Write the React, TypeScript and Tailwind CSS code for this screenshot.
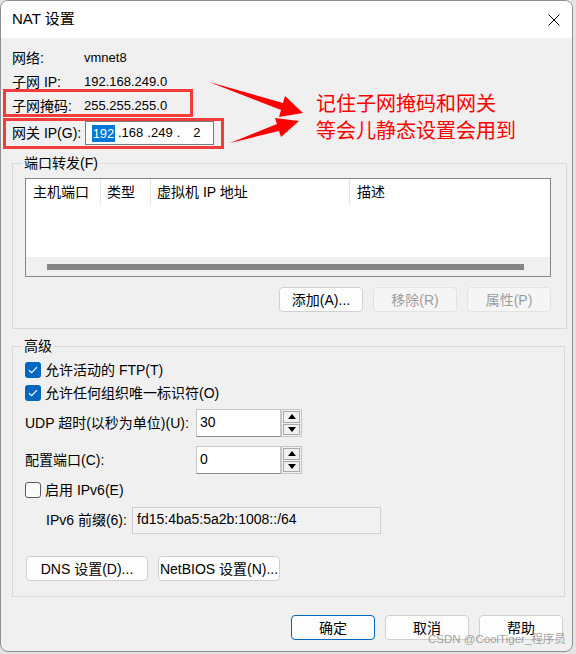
import React from 'react';

type BtnProps = {
  children: React.ReactNode;
  disabled?: boolean;
  primary?: boolean;
  width?: string;
};

function Btn({ children, disabled, primary, width = 'w-[84px]' }: BtnProps) {
  let tone = 'bg-[#fdfdfd] border border-[#d0d0d0] text-black';
  if (disabled) tone = 'bg-[#f5f5f5] border border-[#e3e3e3] text-[#9d9d9d]';
  if (primary) tone = 'bg-[#fdfdfd] border-[1.5px] border-[#0067c0] text-black';
  return (
    <button
      type="button"
      disabled={disabled}
      className={`${width} h-[25px] rounded-[4px] ${tone} flex items-center justify-center text-[14px] leading-none shrink-0`}
    >
      {children}
    </button>
  );
}

function Check({ checked }: { checked?: boolean }) {
  if (!checked) {
    return <span className="w-[16px] h-[16px] rounded-[3px] border border-[#5b5b5b] bg-[#fbfbfb] shrink-0" />;
  }
  return (
    <span className="w-[16px] h-[16px] rounded-[3px] bg-[#0067c0] flex items-center justify-center shrink-0">
      <svg width="10" height="8" viewBox="0 0 10 8">
        <path d="M1 4.2 3.6 6.6 9 1.2" fill="none" stroke="#ffffff" strokeWidth="1.2" />
      </svg>
    </span>
  );
}

function Tri({ up }: { up?: boolean }) {
  return (
    <svg width="8" height="5" viewBox="0 0 8 5">
      <path d={up ? 'M0 5 4 0 8 5Z' : 'M0 0 4 5 8 0Z'} fill="#000000" />
    </svg>
  );
}

function SpinField({ value }: { value: string }) {
  return (
    <div className="flex h-[28px]">
      <div className="w-[85px] h-full bg-white border border-[#c6c6c6] border-b-[#8c8c8c] pl-[3px] pt-[3px] text-[14px] leading-[18px]">
        {value}
      </div>
      <div className="w-[21px] h-full border border-[#c6c6c6] bg-[#f0f0f0] p-[1px] flex flex-col gap-[1px]">
        <div className="flex-1 border border-[#a9a9a9] flex items-center justify-center">
          <Tri up />
        </div>
        <div className="flex-1 border border-[#a9a9a9] flex items-center justify-center">
          <Tri />
        </div>
      </div>
    </div>
  );
}

const info = [
  { label: '网络:', value: 'vmnet8' },
  { label: '子网 IP:', value: '192.168.249.0' },
  { label: '子网掩码:', value: '255.255.255.0' },
];

export default function App() {
  return (
    <div className="relative w-[576px] h-[654px] bg-[#e4e4e4] text-black font-['Liberation_Sans','Noto_Sans_CJK_SC',sans-serif]">
      <div className="w-[573px] h-[652px] rounded-[8px] border border-[#8f8f8f] bg-[#f0f0f0] overflow-hidden flex flex-col">
        {/* title bar */}
        <div className="h-[37px] bg-white flex items-center justify-between pl-[11px] pr-[12px] shrink-0">
          <span className="text-[15px]">NAT 设置</span>
          <svg width="12" height="12" viewBox="0 0 12 12">
            <path d="M0.5 0.5 11.5 11.5M11.5 0.5 0.5 11.5" stroke="#000000" strokeWidth="1" />
          </svg>
        </div>

        <div className="flex-1 flex flex-col pl-[11px] pr-[7px] pt-[8px] text-[14px]">
          {info.map((r) => (
            <div key={r.label} className="h-[24px] flex items-center">
              <span className="w-[72px]">{r.label}</span>
              <span className="text-[13px]">{r.value}</span>
            </div>
          ))}
          <div className="h-[30px] flex items-center">
            <span className="w-[73px]">网关 IP(G):</span>
            <div className="w-[129px] h-[24px] border border-[#7a7a7a] bg-white flex items-center pl-[6px] text-[13px] whitespace-pre">
              <span className="w-[23px] bg-[#0078d7] text-white text-center leading-[17px]">192</span>
              <span className="ml-[3px]">.168</span>
              <span className="ml-[4px]">.249</span>
              <span className="ml-[4px]">.</span>
              <span className="ml-[13px]">2</span>
            </div>
          </div>

          {/* port forwarding */}
          <fieldset className="mt-[7px] border border-[#d8d8d8] pl-[12px] pr-[15px] pb-[16px]">
            <legend className="px-[2px] ml-[-3px] leading-[16px]">端口转发(F)</legend>
            <div className="mt-[7px] w-[526px] h-[99px] border border-[#828790] bg-white flex flex-col">
              <div className="h-[26px] flex text-[14px]">
                <div className="w-[75px] pl-[7px] flex items-center border-r border-[#e5e5e5]">主机端口</div>
                <div className="w-[50px] pl-[6px] flex items-center border-r border-[#e5e5e5]">类型</div>
                <div className="w-[199px] pl-[6px] flex items-center border-r border-[#e5e5e5]">虚拟机 IP 地址</div>
                <div className="pl-[7px] flex items-center">描述</div>
              </div>
              <div className="mt-auto h-[19px] bg-[#f0f0f0] flex items-center">
                <div className="ml-[21px] w-[477px] h-[6px] bg-[#858585]" />
              </div>
            </div>
            <div className="mt-[10px] flex justify-end gap-[10px]">
              <Btn>添加(A)...</Btn>
              <Btn disabled>移除(R)</Btn>
              <Btn disabled>属性(P)</Btn>
            </div>
          </fieldset>

          {/* advanced */}
          <fieldset className="mt-[9px] border border-[#d8d8d8] pl-[12px] pr-[15px] pb-[15px]">
            <legend className="px-[2px] ml-[-3px] leading-[16px]">高级</legend>
            <div className="mt-[8px] h-[16px] flex items-center gap-[4px]">
              <Check checked />
              <span>允许活动的 FTP(T)</span>
            </div>
            <div className="mt-[7px] h-[16px] flex items-center gap-[4px]">
              <Check checked />
              <span>允许任何组织唯一标识符(O)</span>
            </div>
            <div className="mt-[8px] flex items-center">
              <span className="w-[171px]">UDP 超时(以秒为单位)(U):</span>
              <SpinField value="30" />
            </div>
            <div className="mt-[9px] flex items-center">
              <span className="w-[171px]">配置端口(C):</span>
              <SpinField value="0" />
            </div>
            <div className="mt-[8px] h-[16px] flex items-center gap-[4px]">
              <Check />
              <span>启用 IPv6(E)</span>
            </div>
            <div className="mt-[9px] flex items-center pl-[21px]">
              <span className="w-[86px]">IPv6 前缀(6):</span>
              <div className="w-[249px] h-[27px] bg-[#f2f2f2] border border-[#cfcfcf] pl-[4px] pt-[3px] text-[14px] leading-[17px]">
                fd15:4ba5:5a2b:1008::/64
              </div>
            </div>
            <div className="mt-[22px] ml-[1px] flex gap-[10px]">
              <Btn width="w-[122px]">DNS 设置(D)...</Btn>
              <Btn width="w-[122px]">NetBIOS 设置(N)...</Btn>
            </div>
          </fieldset>

          <div className="mt-[18px] pr-[2px] flex justify-end gap-[10px]">
            <Btn primary>确定</Btn>
            <Btn>取消</Btn>
            <Btn>帮助</Btn>
          </div>
        </div>
      </div>

      {/* red annotations drawn over the dialog */}
      <div className="absolute left-[3px] top-[89px] w-[190px] h-[28px] border-[3px] border-[#f23c3c]" />
      <div className="absolute left-[3px] top-[118px] w-[221px] h-[31px] border-[3px] border-[#f23c3c]" />
      <svg className="absolute left-0 top-0" width="576" height="654" viewBox="0 0 576 654">
        <polygon points="209,82 283,103 285,96 303,113 279,117 281,110" fill="#ff0000" />
        <polygon points="230,143 277,124 275,118 299,121 281,137 279,131" fill="#ff0000" />
      </svg>
      <div className="absolute left-[316px] top-[91px] text-[20px] leading-[27px] text-[#ff0000]">
        <div>记住子网掩码和网关</div>
        <div>等会儿静态设置会用到</div>
      </div>
      <div className="absolute left-[428px] top-[631px] text-[11.5px] leading-[16px] text-[#8a8a8a]/80">
        CSDN @CoolTiger_程序员
      </div>
    </div>
  );
}
